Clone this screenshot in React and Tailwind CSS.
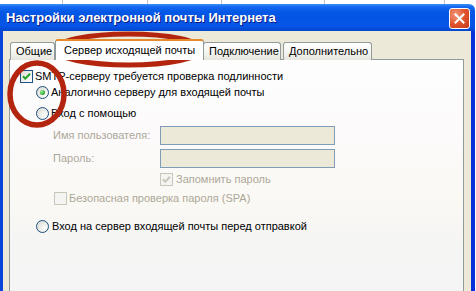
import React from "react";

const font = { fontFamily: '"Liberation Sans", Arial, sans-serif' };

function CheckBox({ checked, disabled }) {
  return (
    <div
      className={
        "w-[13px] h-[13px] shrink-0 border flex items-center justify-center " +
        (disabled
          ? "border-[#C9C7BA] bg-[#F4F4F2]"
          : "border-[#1C5180] bg-[linear-gradient(135deg,#DCDCD7,#FFFFFF)]")
      }
    >
      {checked && (
        <svg width="9" height="9" viewBox="0 0 9 9">
          <path
            d="M1 4.2 L3.3 6.6 L8 1.8"
            fill="none"
            stroke={disabled ? "#C9C7BA" : "#21A121"}
            strokeWidth="2"
          />
        </svg>
      )}
    </div>
  );
}

function Radio({ checked }) {
  return (
    <div className="w-[13px] h-[13px] shrink-0 rounded-full border border-[#1C5180] bg-[radial-gradient(circle_at_70%_70%,#FFFFFF,#E6E6E0_60%,#D6D4CC)] flex items-center justify-center">
      {checked && (
        <div className="w-[5px] h-[5px] rounded-full bg-[radial-gradient(circle_at_35%_35%,#A0F0A0,#21A121_70%)]" />
      )}
    </div>
  );
}

function Tab({ children, w }) {
  return (
    <div
      className={
        "h-[18px] mr-[2px] border border-b-0 border-[#919B9C] rounded-t-[3px] bg-[linear-gradient(#FFFFFF,#F3F3EF_60%,#E6E5DE)] flex items-center px-[5px] text-[11px] text-black leading-none " +
        w
      }
    >
      {children}
    </div>
  );
}

export default function App() {
  return (
    <div
      className="relative w-[476px] h-[291px] overflow-hidden bg-white flex flex-col"
      style={font}
    >
      {/* background strip */}
      <div className="h-[4px] flex shrink-0">
        <div className="w-[63px] border-r border-[#C0C0C0]" />
        <div className="w-[85px] border-r border-[#C0C0C0]" />
        <div className="w-[74px] border-r border-[#C0C0C0]" />
        <div className="w-[103px] border-r border-[#C0C0C0]" />
        <div className="w-[120px] border-r border-[#C0C0C0]" />
      </div>

      {/* window */}
      <div className="w-[475px] flex-1 flex flex-col">
        {/* title bar */}
        <div className="h-[27px] shrink-0 rounded-tr-[6px] bg-[linear-gradient(#3C8DF8_0px,#1467EE_3px,#0458E6_8px,#0354E2_50%,#0555E8_80%,#0047CC)] flex items-center justify-between pl-[6px] pr-[5px]">
          <span
            className="text-white font-bold text-[13px] leading-none [text-shadow:1px_1px_0_#0A1883]"
          >
            Настройки электронной почты Интернета
          </span>
          <div className="w-[21px] h-[21px] mt-[1px] rounded-[3px] border border-white bg-[radial-gradient(circle_at_30%_30%,#F29A7E,#E1542C_50%,#C3381A)] flex items-center justify-center">
            <svg width="11" height="11" viewBox="0 0 11 11">
              <path d="M1.5 1.5 L9.5 9.5 M9.5 1.5 L1.5 9.5" stroke="white" strokeWidth="2" strokeLinecap="square" />
            </svg>
          </div>
        </div>

        {/* body with frame */}
        <div className="flex-1 flex border-l-[3px] border-r-[4px] border-l-[#0845D8] border-r-[#0831D9] bg-[#ECE9D8]">
          <div className="flex-1 flex flex-col pl-[6px] pr-[7px] pt-[9px]">
            {/* tabs */}
            <div className="flex items-end h-[20px] relative z-10 -mb-[1px]">
              <div className="ml-[1px]">
                <Tab w="w-[45px]">Общие</Tab>
              </div>
              <div className="h-[21px] w-[149px] -mr-[1px] -ml-[2px] border border-b-0 border-[#919B9C] border-t-[#E68B2C] border-t-[2px] rounded-t-[3px] bg-white flex items-center pl-[8px] text-[11px] text-black leading-none">
                Сервер исходящей почты
              </div>
              <Tab w="w-[78px]">Подключение</Tab>
              <Tab w="w-[89px]">Дополнительно</Tab>
            </div>

            {/* panel */}
            <div className="flex-1 border border-[#919B9C] border-b-0 bg-[linear-gradient(#FEFEFE,#FCFAFB_30%,#FBF9F4_60%,#F5F5F4_78%,#F5F5F5)] flex flex-col text-[11px] leading-none text-black">
              <div className="mt-[10px] h-[13px] flex items-center pl-[10px]">
                <CheckBox checked />
                <span className="ml-[2px]">SMTP-серверу требуется проверка подлинности</span>
              </div>
              <div className="mt-[3px] h-[13px] flex items-center pl-[26px]">
                <Radio checked />
                <span className="ml-[2px]">Аналогично серверу для входящей почты</span>
              </div>
              <div className="mt-[8px] h-[13px] flex items-center pl-[26px]">
                <Radio />
                <span className="ml-[2px]">Вход с помощью</span>
              </div>
              <div className="mt-[6px] h-[19px] flex items-center pl-[43px]">
                <span className="w-[107px] text-[#ACA899]">Имя пользователя:</span>
                <div className="w-[175px] h-[19px] border border-[#7F9DB9] bg-[#ECE9D8]" />
              </div>
              <div className="mt-[4px] h-[19px] flex items-center pl-[43px]">
                <span className="w-[107px] text-[#ACA899]">Пароль:</span>
                <div className="w-[175px] h-[19px] border border-[#7F9DB9] bg-[#ECE9D8]" />
              </div>
              <div className="mt-[5px] h-[13px] flex items-center pl-[150px]">
                <CheckBox checked disabled />
                <span className="ml-[3px] text-[#ACA899]">Запомнить пароль</span>
              </div>
              <div className="mt-[6px] h-[13px] flex items-center pl-[44px]">
                <CheckBox disabled />
                <span className="ml-[2px] text-[#ACA899]">Безопасная проверка пароля (SPA)</span>
              </div>
              <div className="mt-[15px] h-[13px] flex items-center pl-[26px]">
                <Radio />
                <span className="ml-[3px]">Вход на сервер входящей почты перед отправкой</span>
              </div>
            </div>
          </div>
        </div>
      </div>

      {/* red annotation ellipses */}
      <svg
        className="absolute left-0 top-0 pointer-events-none"
        width="476"
        height="291"
        viewBox="0 0 476 291"
      >
        <ellipse cx="128.5" cy="49.5" rx="73" ry="15.5" fill="none" stroke="#B3250E" strokeWidth="5" />
        <ellipse cx="37" cy="94" rx="27" ry="31" fill="none" stroke="#B3250E" strokeWidth="5.5" />
      </svg>
    </div>
  );
}
